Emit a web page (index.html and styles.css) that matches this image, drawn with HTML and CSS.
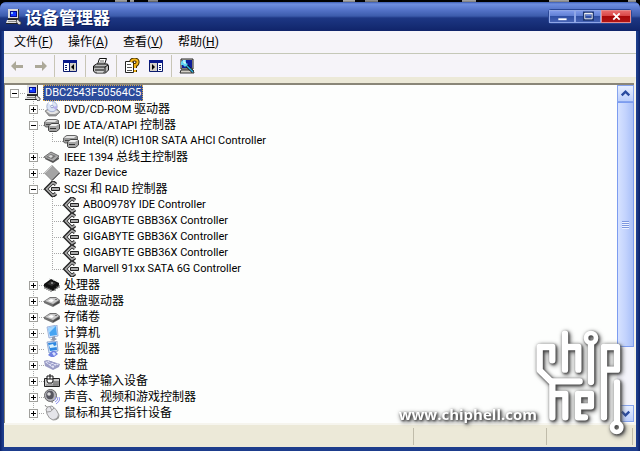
FILE: index.html
```html
<!DOCTYPE html>
<html lang="zh-CN">
<head>
<meta charset="utf-8">
<title>设备管理器</title>
<link rel="stylesheet" href="styles.css">
</head>
<body>
<svg class="defs" aria-hidden="true">
  <symbol id="pc" viewBox="0 0 16 16">
    <path d="M2 0h11v10H2z" fill="#333"/><path d="M2 0h10v9H2z" fill="#dcdcdc"/><path d="M4 2h7v6H4z" fill="#000a90"/><path d="M5 3h5v4H5z" fill="#1238ff"/><path d="M5 3h2v2H5z" fill="#8fc4ff"/>
    <path d="M1 11h12v3H0z" fill="#e0e0e0"/><path d="M0 14h12v1H0zM2 10h11v1H2z" fill="#222"/><path d="M2 12h9v1H2z" fill="#888"/>
    <path d="M12 10l1 2 2 1v2l-2 1-2-2-1-2z" fill="#ddd" stroke="#333" stroke-width=".8"/>
  </symbol>
  <symbol id="disc" viewBox="0 0 16 16">
    <path d="M1 10l3-2h9l3 3-4 4H5z" fill="#999" stroke="#777" stroke-width=".7"/><path d="M2 10l3-1h7l3 2-4 2H6z" fill="#e4e4e4"/>
    <circle cx="8" cy="5.500" r="5.200" fill="#dbe4f6" stroke="#8d9ac0" stroke-width=".7"/><path d="M8 5L4 2a5 5 0 0 1 4-1.500z" fill="#fff"/><path d="M8 6l4 3a5 5 0 0 0 1-4z" fill="#b6b0ef"/><circle cx="8" cy="5.500" r="1.300" fill="#fff" stroke="#7788b8" stroke-width=".7"/>
  </symbol>
  <symbol id="ide" viewBox="0 0 16 16">
    <path d="M.5 5l3-2.500h9l2 1V8l-2 2H2L.5 9z" fill="#999" stroke="#666"/><path d="M1 5l3-2h9l-2 2z" fill="#e4e4e4"/><path d="M2 7.500h4" stroke="#444"/>
    <path d="M4.500 9l3-2.500h7l1 1V12l-3 2.500h-7l-1-1z" fill="#a4a4a4" stroke="#444"/><path d="M5 9l3-2h7l-3 2z" fill="#f0f0f0"/><path d="M6 11.500h6" stroke="#333"/>
  </symbol>
  <symbol id="card" viewBox="0 0 16 16">
    <path d="M0 8l7-5 8 4-6 6z" fill="#aaa" stroke="#555" stroke-width=".8"/><path d="M2 8l5-3 5 2-4 3z" fill="#777"/><path d="M4 7l3-1 2 1-2 2z" fill="#ddd"/><path d="M1 9l8 3 6-4v2l-6 4-8-4z" fill="#555"/>
  </symbol>
  <symbol id="diamond" viewBox="0 0 16 16">
    <path d="M8 0.500l7.500 7.500-7.500 7.500L.5 8z" fill="#a4a4a4" stroke="#888"/><path d="M8 15.500L15.500 8" stroke="#333"/><path d="M8 1L1 8" stroke="#ccc"/>
  </symbol>
  <symbol id="scsi" viewBox="0 0 16 16">
    <path d="M12 3.500L9 1 2 8l7 7 3-2.500" fill="none" stroke="#222" stroke-width="3.600"/><path d="M12 3.500L9 1.500 2.500 8 9 14.500l3-2" fill="none" stroke="#aaa" stroke-width="1.600"/>
    <path d="M7.500 6.500h8v3h-8z" fill="#aaa" stroke="#222"/>
  </symbol>
  <symbol id="cpu" viewBox="0 0 16 16">
    <path d="M0 7l7-5 8 4v3l-6 5-9-4z" fill="#111"/><path d="M3 7l4-3 5 2-4 3z" fill="#333"/>
    <path d="M1 9v3M3 10v3M5 11v3M7 12v3M11 11v3M13 9v3M15 8v3" stroke="#555"/><path d="M5 2h1M9 3h1M12 4h1M7 6h2" stroke="#ccc"/>
  </symbol>
  <symbol id="disk" viewBox="0 0 16 16">
    <path d="M0 8l6-4h6l4 3v3l-7 4-9-4z" fill="#707070"/><path d="M1 8l5-3h6l3 2-6 4z" fill="#c8c8c8"/><path d="M4 8l3-2 3 1-2 2z" fill="#fff"/><path d="M9 12l6-4v2l-6 3z" fill="#444"/><path d="M11 6.500h2" stroke="#777"/>
  </symbol>
  <symbol id="monitor" viewBox="0 0 16 16">
    <path d="M3 2l10-2 1 11-9 2z" fill="#d7e5fa" stroke="#7f9ccf" stroke-width=".7"/><path d="M4 3l8-2 1 9-7 1z" fill="#46a4f2"/><path d="M4 3l8-2-7 7z" fill="#a4d7ff"/><path d="M8 12l3-1v2l2 1-3 2-4-1 2-1z" fill="#8f98ad"/>
  </symbol>
  <symbol id="display" viewBox="0 0 16 16">
    <path d="M3 1l10-1 1 10-9 2z" fill="#d7e5fa" stroke="#6f8cbf" stroke-width=".7"/><path d="M4 2l8-1 1 8-7 1z" fill="#2e88e0"/><path d="M5 4l4-1 1 2 3-1v2l-7 1z" fill="#d8f2ff"/><path d="M8 10h3l3 3-4 3H7l-3-2z" fill="#6d80e0"/><path d="M8 12l2-1 2 2-2 2z" fill="#dbe2ff"/>
  </symbol>
  <symbol id="keyboard" viewBox="0 0 16 16">
    <path d="M0 4l3-1 13 4-1 3-6 3L1 9z" fill="#9a9cc4"/><path d="M1 5l3-1 11 3-6 4z" fill="#e0e2f4"/><path d="M3 5l8 4M5 4l8 3M4 7l4-2M7 9l4-3M10 10l3-2" stroke="#8083b8" stroke-width=".7"/>
  </symbol>
  <symbol id="hid" viewBox="0 0 16 16">
    <path d="M.5 5.500h15v8H.5z" fill="#ccc" stroke="#222"/><path d="M2 12h12M9 9h6M9 11h6M10 8v5M12 8v5M14 8v5" stroke="#777"/>
    <path d="M3 3h6v5l-1 2H4L3 8z" fill="#fff" stroke="#111"/><path d="M6 1v5M3 6h6" stroke="#111"/>
  </symbol>
  <symbol id="sound" viewBox="0 0 16 16">
    <circle cx="6.500" cy="6.500" r="6" fill="#b5b5bd" stroke="#666"/><ellipse cx="6" cy="6" rx="3.800" ry="4.300" fill="#55555f"/><circle cx="5" cy="5" r="1.800" fill="#ddd"/><path d="M4 12l5 2v-2z" fill="#888"/>
    <path d="M11 13q3-1 3-5M12 15q4-2 4-7M10 11q2-1 2-3" fill="none" stroke="#8f94ec"/>
  </symbol>
  <symbol id="mouse" viewBox="0 0 16 16">
    <path d="M1 0q1 3 4 2" fill="none" stroke="#888"/><path d="M2 4q2-3 6-3 5 3 7 9 0 5-6 5Q5 14 3 9z" fill="#e5e5ea" stroke="#999"/><path d="M3 7q4 1 7-4M6 2l2 3" fill="none" stroke="#999"/><path d="M14 9q0 5-5 5 3 2 6-1z" fill="#999"/>
  </symbol>
</svg>

<div class="desktop" aria-hidden="true"></div>
<main class="window">
  <header class="titlebar">
    <svg class="icon"><use href="#pc"/></svg>
    <h1>设备管理器</h1>
    <div class="captions">
      <button aria-label="最小化"><svg viewBox="0 0 24 12"><path d="M8 8h9v2H8z" fill="#fff"/></svg></button>
      <button aria-label="最大化"><svg viewBox="0 0 24 12"><path d="M8 2h9v7H8z" fill="none" stroke="#1c3572" stroke-width="3"/><path d="M8.500 2.500h8v6h-8zM8 3h9" fill="none" stroke="#fff"/></svg></button>
      <button class="close" aria-label="关闭"><svg viewBox="0 0 28 12"><path d="M11 2.500l7 7M18 2.500l-7 7" stroke="#fff" stroke-width="2"/></svg></button>
    </div>
  </header>
  <nav class="menu">
    <button>文件(<u>F</u>)</button><button>操作(<u>A</u>)</button><button>查看(<u>V</u>)</button><button>帮助(<u>H</u>)</button>
  </nav>
  <div class="toolbar">
    <div class="group">
      <button aria-label="后退" disabled><svg viewBox="0 0 16 16"><path d="M2 8l5-5v4h7v3H7v3z" fill="#aca899"/></svg></button>
      <button aria-label="前进" disabled><svg viewBox="0 0 16 16"><path d="M14 8L9 3v4H2v3h7v3z" fill="#aca899"/></svg></button>
    </div>
    <div class="group">
      <button aria-label="显示控制台树"><svg viewBox="0 0 16 16"><path d="M1.500 2.500h13v11h-13z" fill="#fff" stroke="#0a1a6c"/><path d="M1 2h14v3H1z" fill="#0a1a8c"/><path d="M7 5h7v8H7z" fill="#d4d0c8"/><path d="M7.500 5v8M3 7.500h2M3 9.500h2M3 11.500h2" stroke="#0a1a6c"/><path d="M12 6v6L9 9z"/></svg></button>
    </div>
    <div class="group">
      <button aria-label="打印"><svg viewBox="0 0 16 16"><path d="M4.500 6.500l2-6h7l-2 6z" fill="#fff" stroke="#111"/><path d="M7 3h4M6 5h5" stroke="#666"/><path d="M.500 8l3-2h11l1 2v4l-3 3h-10l-2-2z" fill="#bbb" stroke="#111"/><path d="M1 9h11l3-2M2 12h9M12 9v5" fill="none" stroke="#111"/><path d="M4 14h6" stroke="#eee"/></svg></button>
    </div>
    <div class="group">
      <button aria-label="属性"><svg viewBox="0 0 16 16"><path d="M1.500 3.500h8v11h-8z" fill="#fff" stroke="#222"/><path d="M3 6.500h4M3 9.500h5M3 12.500h5" stroke="#555"/><path d="M7 4q1-3 4-2.500t2.500 3Q13 7 11 7v3M11 12v2" fill="none" stroke="#433000" stroke-width="4"/><path d="M7 4q1-3 4-2.500t2.500 3Q13 7 11 7v3M11 12v2" fill="none" stroke="#f2b41c" stroke-width="2"/></svg></button>
      <button aria-label="操作窗格"><svg viewBox="0 0 16 16"><path d="M1.500 2.500h13v11h-13z" fill="#fff" stroke="#0a1a6c"/><path d="M1 2h14v3H1z" fill="#0a1a8c"/><path d="M2 5h7v8H2z" fill="#d4d0c8"/><path d="M9.500 5v8M11 7.500h2M11 9.500h2M11 11.500h2" stroke="#0a1a6c"/><path d="M4 6v6l3-3z"/></svg></button>
    </div>
    <div class="group">
      <button aria-label="扫描硬件改动"><svg viewBox="0 0 16 16"><path d="M2 1h12v10H2z" fill="#d4d0c8" stroke="#222"/><path d="M3 2h10v8H3z" fill="#0c1c9a"/><path d="M2 12h12l1 3H1z" fill="#d4d0c8" stroke="#333"/><path d="M6 6l8 8" stroke="#111" stroke-width="3"/><path d="M6 6l8 8" stroke="#2cb5e8" stroke-width="1.500"/><path d="M2 4l2-2h3v3l2 1-3 3-2-2H2z" fill="#5fd5f4"/><path d="M5 2v3h2" fill="none" stroke="#fff"/></svg></button>
    </div>
  </div>

  <section class="pane">
    <ul class="tree">
      <li>
        <div class="row"><button class="toggle open" aria-label="折叠"></button><svg class="icon"><use href="#pc"/></svg><span class="label selected">DBC2543F50564C5</span></div>
        <ul>
          <li><div class="row"><button class="toggle" aria-label="展开"></button><svg class="icon"><use href="#disc"/></svg><span class="label">DVD/CD-ROM <b>驱动器</b></span></div></li>
          <li><div class="row"><button class="toggle open" aria-label="折叠"></button><svg class="icon"><use href="#ide"/></svg><span class="label">IDE ATA/ATAPI <b>控制器</b></span></div>
            <ul class="leaves">
              <li><div class="row"><svg class="icon"><use href="#ide"/></svg><span class="label">Intel(R) ICH10R SATA AHCI Controller</span></div></li>
            </ul>
          </li>
          <li><div class="row"><button class="toggle" aria-label="展开"></button><svg class="icon"><use href="#card"/></svg><span class="label">IEEE 1394 <b>总线主控制器</b></span></div></li>
          <li><div class="row"><button class="toggle" aria-label="展开"></button><svg class="icon"><use href="#diamond"/></svg><span class="label">Razer Device</span></div></li>
          <li><div class="row"><button class="toggle open" aria-label="折叠"></button><svg class="icon"><use href="#scsi"/></svg><span class="label">SCSI <b>和</b> RAID <b>控制器</b></span></div>
            <ul class="leaves">
              <li><div class="row"><svg class="icon"><use href="#scsi"/></svg><span class="label">AB0O978Y IDE Controller</span></div></li>
              <li><div class="row"><svg class="icon"><use href="#scsi"/></svg><span class="label">GIGABYTE GBB36X Controller</span></div></li>
              <li><div class="row"><svg class="icon"><use href="#scsi"/></svg><span class="label">GIGABYTE GBB36X Controller</span></div></li>
              <li><div class="row"><svg class="icon"><use href="#scsi"/></svg><span class="label">GIGABYTE GBB36X Controller</span></div></li>
              <li><div class="row"><svg class="icon"><use href="#scsi"/></svg><span class="label">Marvell 91xx SATA 6G Controller</span></div></li>
            </ul>
          </li>
          <li><div class="row"><button class="toggle" aria-label="展开"></button><svg class="icon"><use href="#cpu"/></svg><span class="label"><b>处理器</b></span></div></li>
          <li><div class="row"><button class="toggle" aria-label="展开"></button><svg class="icon"><use href="#disk"/></svg><span class="label"><b>磁盘驱动器</b></span></div></li>
          <li><div class="row"><button class="toggle" aria-label="展开"></button><svg class="icon"><use href="#disk"/></svg><span class="label"><b>存储卷</b></span></div></li>
          <li><div class="row"><button class="toggle" aria-label="展开"></button><svg class="icon"><use href="#monitor"/></svg><span class="label"><b>计算机</b></span></div></li>
          <li><div class="row"><button class="toggle" aria-label="展开"></button><svg class="icon"><use href="#display"/></svg><span class="label"><b>监视器</b></span></div></li>
          <li><div class="row"><button class="toggle" aria-label="展开"></button><svg class="icon"><use href="#keyboard"/></svg><span class="label"><b>键盘</b></span></div></li>
          <li><div class="row"><button class="toggle" aria-label="展开"></button><svg class="icon"><use href="#hid"/></svg><span class="label"><b>人体学输入设备</b></span></div></li>
          <li><div class="row"><button class="toggle" aria-label="展开"></button><svg class="icon"><use href="#sound"/></svg><span class="label"><b>声音、视频和游戏控制器</b></span></div></li>
          <li><div class="row"><button class="toggle" aria-label="展开"></button><svg class="icon"><use href="#mouse"/></svg><span class="label"><b>鼠标和其它指针设备</b></span></div></li>
        </ul>
      </li>
    </ul>
    <div class="scrollbar">
      <button class="arrow" aria-label="向上滚动"><svg viewBox="0 0 16 16"><path d="M4 10l4-4 4 4" fill="none" stroke="#2a4ba0" stroke-width="2.500"/></svg></button>
      <div class="track"><div class="thumb"></div></div>
      <button class="arrow" aria-label="向下滚动"><svg viewBox="0 0 16 16"><path d="M4 6l4 4 4-4" fill="none" stroke="#2a4ba0" stroke-width="2.500"/></svg></button>
    </div>
  </section>
  <footer class="status"><span></span><span></span><span></span></footer>
</main>

<div class="watermark">
  <span>www.chiphell.com</span>
  <svg viewBox="0 0 360 393" role="img" aria-label="chiphell">
    <g fill="none" stroke="#fff" stroke-width="19" stroke-linecap="round" stroke-linejoin="round">
      <path d="M97 121V81H59V151L97 188V292M97 184H179M97 222H136V292"/>
      <path d="M135 41V149M135 81H175V149"/>
      <path d="M213 72V186"/>
      <path d="M252 292V81H291V149H252"/>
      <path d="M195 292H174V222H213V259H174"/>
      <path d="M291 187V304"/>
      <circle cx="213" cy="54" r="15" stroke-width="14"/>
      <circle cx="290" cy="322" r="14" stroke-width="14"/>
    </g>
  </svg>
</div>
</body>
</html>
```
FILE: styles.css
```css
* { box-sizing: border-box; }
body {
  margin: 0;
  height: 100vh;
  display: flex;
  flex-direction: column;
  background: #000;
  color: #000;
  font: 11px/16px Roboto, "Noto Sans CJK SC", sans-serif;
  overflow: hidden;
}
button { margin: 0; padding: 0; border: 0; background: none; font: inherit; color: inherit; }
svg { display: block; }
ul { margin: 0; padding: 0; list-style: none; }
.defs { position: absolute; width: 0; height: 0; }
.icon { width: 16px; height: 16px; flex: none; overflow: visible; }

.desktop {
  height: 2px;
  flex: none;
  background:
    linear-gradient(#aaa, #777) 115px 0 / 12px 2px no-repeat,
    linear-gradient(#aaa, #777) 130px 0 / 4px 2px no-repeat,
    linear-gradient(#999, #555) 148px 0 / 10px 2px no-repeat,
    linear-gradient(#bbb, #777) 343px 0 / 12px 2px no-repeat,
    linear-gradient(#999, #666) 365px 0 / 13px 2px no-repeat,
    linear-gradient(#aaa, #777) 462px 0 / 14px 2px no-repeat,
    linear-gradient(#aaa, #777) 549px 0 / 20px 2px no-repeat,
    linear-gradient(#aaa, #777) 628px 0 / 8px 2px no-repeat,
    #000;
}
.window {
  flex: 1;
  min-height: 0;
  display: flex;
  flex-direction: column;
  padding: 0 4px 4px;
  background: linear-gradient(90deg, #0b2067, #1d3d8c 3px, #1d3d8c calc(100% - 3px), #0b2067);
  border-radius: 6px 6px 0 0;
}
.titlebar {
  height: 29px;
  flex: none;
  display: flex;
  align-items: center;
  gap: 3px;
  margin: 0 -4px;
  padding: 0 8px 0 6px;
  border-radius: 6px 6px 0 0;
  background: linear-gradient(#3c5cb0, #6f8fe0 2px, #5473c8 8px, #3c5cac 14px, #1d3784 16px, #152c74 24px, #10246a);
}
.titlebar h1 { flex: 1; margin: 0; color: #fff; font: bold 17px/20px "Noto Sans CJK SC", sans-serif; text-shadow: 1px 1px #0c1f5c; }
.captions { display: flex; border: 1px solid #2a4796; border-radius: 3px; }
.captions button {
  width: 26px;
  height: 13px;
  border: 1px solid #8fa6e6;
  background: linear-gradient(#7f9aea, #5f7ed2 45%, #2f4fa4 50%, #4562b4);
}
.captions .close { width: 30px; border-color: #e58a8a; background: linear-gradient(#e86a6a, #d84545 45%, #a80808 50%, #b01414); }
.captions svg { width: 100%; height: 100%; }

.menu {
  height: 23px;
  flex: none;
  display: flex;
  align-items: center;
  gap: 15px;
  padding: 0 10px;
  background: #f6f4f9;
  border-bottom: 1px solid #c5c8b8;
  font-size: 12px;
}
.toolbar { height: 23px; flex: none; display: flex; align-items: center; background: #f6f4f9; }
.group { display: flex; align-items: center; gap: 8px; height: 22px; padding: 0 7px; border-right: 1px solid #c8c5b6; }
.group:first-child { padding: 0 5px; }
.group:last-child { border: 0; }
.group button, .group svg { width: 16px; height: 16px; }

.pane {
  flex: 1;
  min-height: 0;
  display: flex;
  background: #fdfefd;
  border-top: 6px solid #ece9d8;
  border-right: 2px solid #f4f2e8;
  box-shadow: inset 1px 2px #8a8678;
  padding: 2px 0 1px 2px;
}
.tree { flex: 1; min-width: 0; overflow: hidden; padding-left: 4px; }
.tree ul { padding-left: 19px; }
.tree ul > li { background: repeating-linear-gradient(#a8a8a8 0 1px, transparent 1px 2px) 4px 0 / 1px 100% no-repeat; }
.tree .leaves > li:last-child { background-size: 1px 8px; }
.row {
  display: flex;
  align-items: center;
  height: 16px;
  background: repeating-linear-gradient(90deg, #a8a8a8 0 1px, transparent 1px 2px) 4px 8px / 12px 1px no-repeat;
}
.row .icon { margin-right: 2px; }
.leaves .icon { margin-left: 15px; }
.toggle {
  width: 9px;
  height: 9px;
  margin-right: 6px;
  flex: none;
  border: 1px solid #a0a09c;
  background:
    linear-gradient(#000, #000) center / 5px 1px no-repeat,
    linear-gradient(#000, #000) center / 1px 5px no-repeat,
    #fff;
}
.toggle.open { background: linear-gradient(#000, #000) center / 5px 1px no-repeat, #fff; }
.label { padding: 0 2px; white-space: nowrap; }
.label b { font-weight: 400; font-size: 12px; }
.selected { color: #fff; background: #2c4c9c; outline: 1px dotted #d8a850; outline-offset: -1px; }

.scrollbar { width: 17px; flex: none; display: flex; flex-direction: column; background: #f4f4fb; }
.arrow { width: 17px; height: 17px; flex: none; border: 1px solid #86a4ee; background: linear-gradient(#e6eeff, #bccffc); }
.arrow svg { width: 15px; height: 15px; }
.track { flex: 1; }
.thumb {
  height: 81%;
  border: 1px solid #7c9cf0;
  background:
    repeating-linear-gradient(#7d98e0 0 1px, #eef3ff 1px 2px) center / 7px 8px no-repeat,
    linear-gradient(90deg, #d6e2ff, #c3d3fd 50%, #a9c0f8);
}
.status { height: 24px; flex: none; display: flex; background: #ece9d8; border-top: 2px solid #f6f5ee; padding: 3px 3px 2px 0; }
.status span { border-right: 1px solid #c0bcaa; }
.status span:nth-child(1) { flex: 411; }
.status span:nth-child(2) { flex: 133; }
.status span:nth-child(3) { flex: 85; }

.watermark {
  position: absolute;
  right: 0;
  bottom: 0;
  display: flex;
  align-items: flex-end;
  pointer-events: none;
  color: #fff;
  filter: drop-shadow(1px 1px 1px #444) drop-shadow(1px 1px 2px #555);
}
.watermark span { font: 700 15px/20px "Open Sans", sans-serif; margin: 0 -17px 27px 0; }
.watermark svg { width: 120px; height: 131px; }
```
